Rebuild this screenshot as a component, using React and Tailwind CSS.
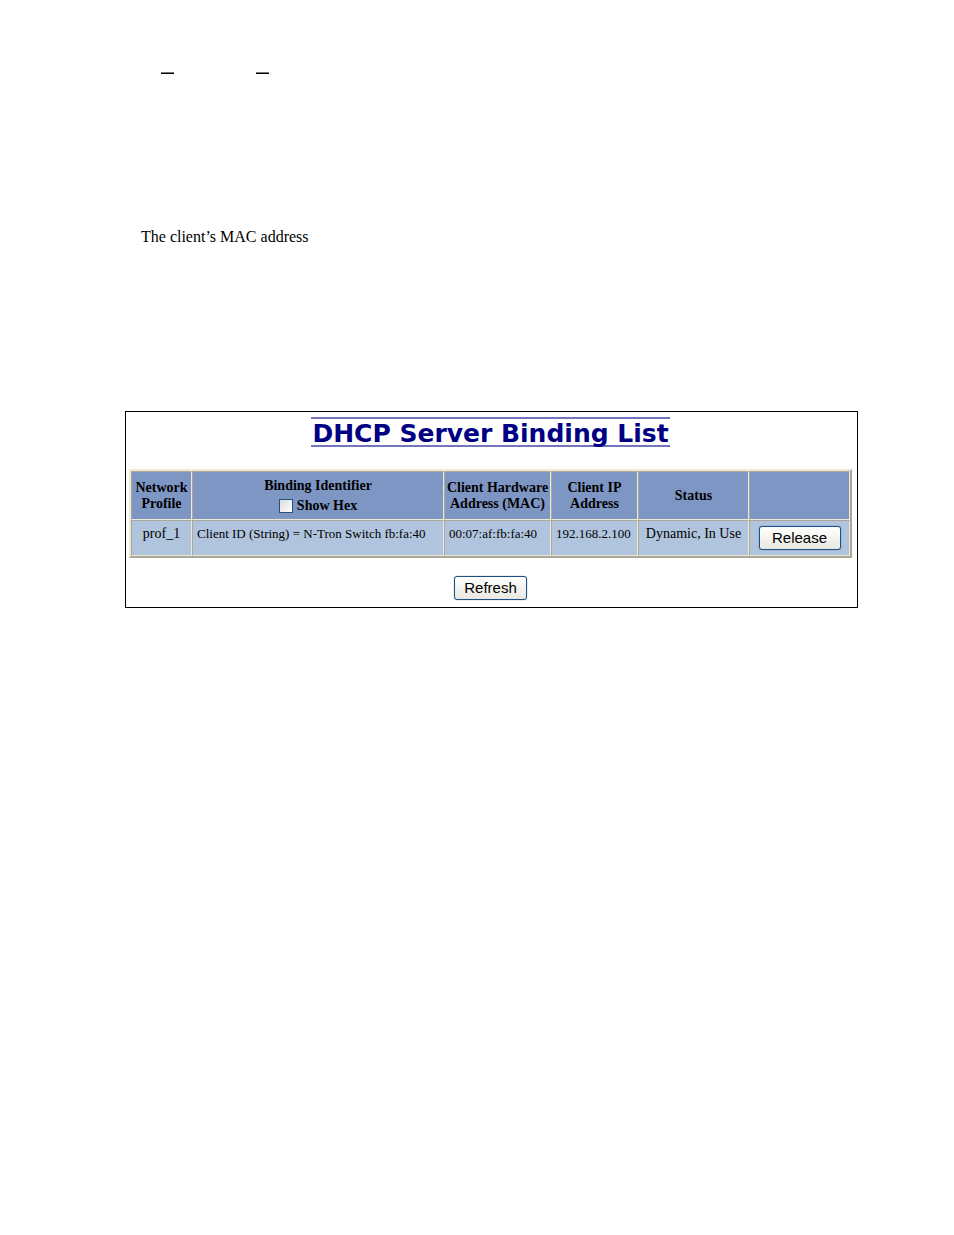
import React, { useState } from 'react';

const bindings = [
    { profile: 'prof_1', identifier: 'Client ID (String) = N-Tron Switch fb:fa:40', mac: '00:07:af:fb:fa:40', ip: '192.168.2.100', status: 'Dynamic, In Use' },
];

const Th = ({ children }) => (
    <th className="h-[49px] border border-t-[#aca899] border-l-[#aca899] border-r-[#ece9d8] border-b-[#ece9d8] bg-[#7e96c4] p-0 text-center align-middle font-bold">{children}</th>
);

const Td = ({ children, className = '' }) => (
    <td className={`h-9 border border-t-[#aca899] border-l-[#aca899] border-r-[#ece9d8] border-b-[#ece9d8] bg-[#b0c4de] px-1 pt-0 pb-2 align-middle whitespace-nowrap ${className}`}>{children}</td>
);

const Button = ({ children, className = '' }) => (
    <button type="button" className={`block h-6 rounded-[3px] border border-[#1d4f86] bg-linear-to-b from-white to-[#e9e8e0] text-center font-['Liberation_Sans',sans-serif] text-[15px] leading-[22px] text-black shadow-[0_0_1px_#1d4f86] ${className}`}>{children}</button>
);

export default function App() {
    const [showHex, setShowHex] = useState(false);

    return (
        <div className="min-h-screen bg-white pt-[72px] pr-24 pl-[125px] font-['Liberation_Serif',serif] text-black">
            <div className="flex gap-[82px] pl-9">
                <span className="h-0.5 w-[13px] border-t border-[#777] bg-black" />
                <span className="h-0.5 w-[13px] border-t border-[#777] bg-black" />
            </div>
            <p className="mt-[153px] pl-4 text-base leading-5">The client’s MAC address</p>

            <main className="mt-[164px] border border-black pt-[5px] pr-[5px] pb-[7px] pl-[3px]">
                <h1 className="mx-auto h-[30px] w-fit border-y-2 border-[#7474bc] px-px font-['DejaVu_Sans',sans-serif] text-[25px] leading-[30px] font-bold whitespace-nowrap text-[#000084]">DHCP Server Binding List</h1>

                <table className="mt-[22px] w-full table-fixed border-separate border-spacing-0 border-2 border-t-[#ece9d8] border-l-[#ece9d8] border-r-[#aca899] border-b-[#aca899] text-[14px] leading-4">
                    <colgroup>
                        <col className="w-[61px]" />
                        <col className="w-[252px]" />
                        <col className="w-[107px]" />
                        <col className="w-[87px]" />
                        <col className="w-[111px]" />
                        <col />
                    </colgroup>
                    <thead>
                        <tr>
                            <Th>Network<br />Profile</Th>
                            <Th>
                                <div>Binding Identifier</div>
                                <label className="mt-1 flex items-center justify-center gap-1">
                                    <input type="checkbox" checked={showHex} onChange={e => setShowHex(e.target.checked)} className="size-[14px] appearance-none border border-[#1d5281] bg-linear-to-br from-[#dcdcd7] to-white checked:bg-none checked:bg-[#21a121]" />
                                    Show Hex
                                </label>
                            </Th>
                            <Th>Client Hardware<br />Address (MAC)</Th>
                            <Th>Client IP<br />Address</Th>
                            <Th>Status</Th>
                            <Th />
                        </tr>
                    </thead>
                    <tbody>
                        {bindings.map(b => (
                            <tr key={b.mac}>
                                <Td className="text-center">{b.profile}</Td>
                                <Td className="text-[13px]">{b.identifier}</Td>
                                <Td className="text-[13px]">{b.mac}</Td>
                                <Td className="text-[13px]">{b.ip}</Td>
                                <Td className="text-center">{b.status}</Td>
                                <td className="border border-t-[#aca899] border-l-[#aca899] border-r-[#ece9d8] border-b-[#ece9d8] bg-[#b0c4de] p-0 align-middle">
                                    <Button className="mx-auto w-[82px]">Release</Button>
                                </td>
                            </tr>
                        ))}
                    </tbody>
                </table>

                <Button className="mx-auto mt-[18px] w-[73px]">Refresh</Button>
            </main>
        </div>
    );
}
